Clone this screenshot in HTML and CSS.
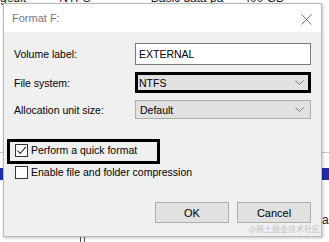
FILE: index.html
```html
<!DOCTYPE html>
<html lang="en">
<head>
  <meta charset="UTF-8" />
  <title>Format F:</title>
  <link rel="stylesheet" href="styles.css">
</head>
<body>

  <!-- desktop behind the dialog -->
  <div class="desk">
    <div class="desk-text">gedit&nbsp;&nbsp;&nbsp;&nbsp;&nbsp;&nbsp;&nbsp;&nbsp;&nbsp;&nbsp;NTFS&nbsp;&nbsp;&nbsp;&nbsp;&nbsp;&nbsp;&nbsp;&nbsp;&nbsp;&nbsp;&nbsp;&nbsp;&nbsp;&nbsp;&nbsp;&nbsp;&nbsp;&nbsp;Basic data pa&nbsp;&nbsp;&nbsp;&nbsp;&nbsp;&nbsp;400 GB&nbsp;&nbsp;&nbsp;&nbsp;&nbsp;&nbsp;&nbsp;&nbsp;&nbsp;&nbsp;&nbsp;&nbsp;&nbsp;&nbsp;&nbsp;&nbsp;&nbsp;&nbsp;&nbsp;&nbsp;&nbsp;&nbsp;&nbsp;&nbsp;&nbsp;&nbsp;&nbsp;&nbsp;&nbsp;&nbsp;&nbsp;&nbsp;&nbsp;&nbsp;&nbsp;&nbsp;&nbsp;&nbsp;&nbsp;2</div>
    <div class="desk-line"></div>
    <div class="desk-band"></div>
    <div class="desk-ar">ar</div>
    <div class="desk-tick"></div>
  </div>

  <div class="dialog">
    <div class="titlebar">
      <span class="title">Format F:</span>
      <svg class="close" width="11" height="11" viewBox="0 0 11 11">
        <path d="M0.5 0.5 L10.5 10.5 M10.5 0.5 L0.5 10.5" stroke="#7a7a7a" stroke-width="1" fill="none"/>
      </svg>
    </div>

    <div class="content">
      <div class="fields">
        <label>Volume label:</label>
        <div class="textbox">EXTERNAL</div>

        <label>File system:</label>
        <div class="combo combo-hl">
          <span>NTFS</span>
          <svg width="9" height="5" viewBox="0 0 9 5"><path d="M0.5 0.5 L4.5 4.5 L8.5 0.5" stroke="#777" fill="none"/></svg>
        </div>

        <label>Allocation unit size:</label>
        <div class="combo">
          <span>Default</span>
          <svg width="9" height="5" viewBox="0 0 9 5"><path d="M0.5 0.5 L4.5 4.5 L8.5 0.5" stroke="#777" fill="none"/></svg>
        </div>
      </div>

      <div class="checks">
        <div class="check check-hl">
          <span class="box">
            <svg width="11" height="11" viewBox="0 0 11 11"><path d="M1.5 5.5 L4.2 8.5 L9.8 1.8" stroke="#222" stroke-width="1.1" fill="none"/></svg>
          </span>
          Perform a quick format
        </div>
        <div class="check">
          <span class="box"></span>
          Enable file and folder compression
        </div>
      </div>

      <div class="buttons">
        <button class="btn">OK</button>
        <button class="btn">Cancel</button>
      </div>

      <div class="watermark">@稀土掘金技术社区</div>
    </div>
  </div>

</body>
</html>
```

FILE: styles.css
```css
* {
  box-sizing: border-box;
  margin: 0;
  padding: 0;
}

body {
  font-family: 'Liberation Sans', Arial, sans-serif;
  font-size: 10.5px;
  color: #000;
  background: #fff;
  position: relative;
  width: 329px;
  height: 242px;
  overflow: hidden;
}

/* desktop behind */
.desk-text {
  position: absolute;
  left: 0;
  top: -9px;
  white-space: nowrap;
  font-size: 12px;
  color: #1a1a2a;
}

.desk-line {
  position: absolute;
  left: 0;
  right: 0;
  top: 152px;
  height: 1px;
  background: #c8c8c8;
}

.desk-band {
  position: absolute;
  left: 0;
  right: 0;
  top: 168px;
  height: 12px;
  background: #1f2fa8;
}

.desk-ar {
  position: absolute;
  left: 322px;
  top: 213px;
  font-size: 12px;
  color: #222;
}

.desk-tick {
  position: absolute;
  left: 80px;
  top: 237px;
  width: 5px;
  height: 5px;
  border-left: 1px solid #555;
  border-right: 1px solid #555;
}

/* dialog */
.dialog {
  position: relative;
  margin: 3px 0 0 3px;
  width: 319px;
  height: 234px;
  border: 1px solid #b9b9b9;
  background: #f0f0f0;
  box-shadow: 1px 1px 3px rgba(0, 0, 0, 0.25);
  display: flex;
  flex-direction: column;
}

.titlebar {
  height: 28px;
  background: #fff;
  display: flex;
  align-items: center;
  justify-content: space-between;
  padding: 0 9px 0 8px;
}

.title {
  color: #7a7a7a;
  font-size: 11px;
}

.close {
  margin-top: 2px;
}

.content {
  position: relative;
  flex: 1;
  padding: 11px 10px 0 10px;
}

.fields {
  display: grid;
  grid-template-columns: 121px 176px;
  grid-template-rows: 22px 21px 19px;
  row-gap: 7px;
  align-items: center;
}

.textbox {
  height: 22px;
  background: #fff;
  border: 1px solid #7a7a7a;
  padding-left: 3px;
  display: flex;
  align-items: center;
}

.combo {
  height: 19px;
  background: #e1e1e1;
  border: 1px solid #adadad;
  padding: 0 6px 0 4px;
  display: flex;
  align-items: center;
  justify-content: space-between;
}

.combo-hl {
  height: 21px;
  border: 3px solid #000;
  padding: 0 4px 0 1px;
}

.checks {
  margin-top: 20px;
  margin-left: 1px;
}

.check {
  position: relative;
  height: 22px;
  display: flex;
  align-items: center;
  gap: 3px;
}

.check-hl::after {
  content: '';
  position: absolute;
  left: -8px;
  top: 0;
  width: 147px;
  height: 19px;
  border: 3px solid #000;
}

.box {
  width: 13px;
  height: 13px;
  border: 1px solid #333;
  background: #fff;
  display: flex;
  align-items: center;
  justify-content: center;
}

.buttons {
  margin-top: 19px;
  display: flex;
  justify-content: flex-end;
  gap: 8px;
}

.btn {
  width: 74px;
  height: 21px;
  background: #e1e1e1;
  border: 1px solid #adadad;
  font-family: 'Liberation Sans', Arial, sans-serif;
  font-size: 11px;
  color: #000;
}

.watermark {
  position: absolute;
  right: 1px;
  bottom: 2px;
  font-family: 'Noto Sans CJK SC', sans-serif;
  font-size: 8px;
  color: #c2c2c2;
}
```
